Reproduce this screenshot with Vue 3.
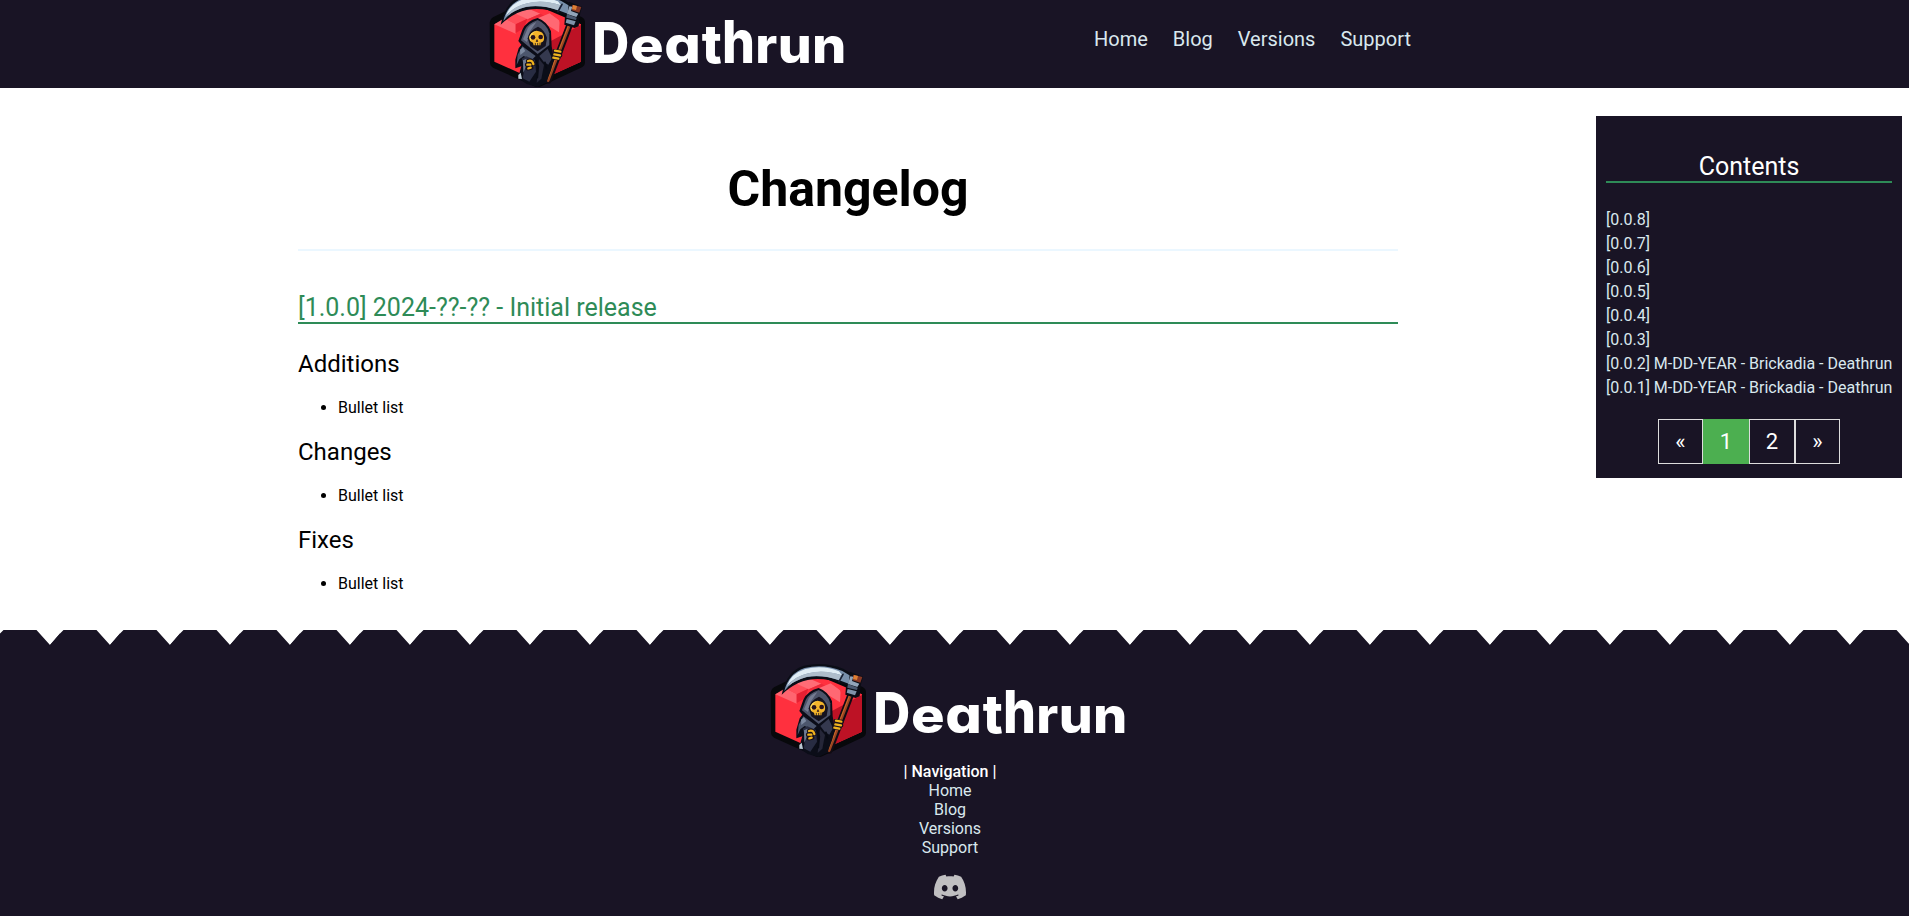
<script setup>
import { h } from 'vue'

const links = ['Home', 'Blog', 'Versions', 'Support']
const sections = ['Additions', 'Changes', 'Fixes']
const contents = [
  '[0.0.8]',
  '[0.0.7]',
  '[0.0.6]',
  '[0.0.5]',
  '[0.0.4]',
  '[0.0.3]',
  '[0.0.2] M-DD-YEAR - Brickadia - Deathrun',
  '[0.0.1] M-DD-YEAR - Brickadia - Deathrun',
]
const pages = ['«', '1', '2', '»']

const p = (d, fill, extra = {}) => h('path', { d, fill, ...extra })
const line = (d, stroke, width) =>
  h('path', { d, fill: 'none', stroke, 'stroke-width': width, 'stroke-linecap': 'round', 'stroke-linejoin': 'round' })

// Letters of the wordmark: glyph, left edge, font size, advance
const letters = [
  ['D', 340, 169, 111],
  ['e', 453, 149, 101],
  ['a', 556, 152, 110],
  ['t', 668, 162, 60],
  ['h', 729, 177, 99],
  ['r', 829, 149, 66],
  ['u', 896, 149, 102],
  ['n', 999, 149, 103],
]

const Logo = () =>
  h('svg', { width: 380, height: 110, viewBox: '0 0 1140 330', role: 'img' }, [
    // cube
    p('M32 112Q33 102 42 97L160 40Q176 33 192 40L309 97Q318 102 318 112V232Q318 242 309 247L190 302Q176 310 162 302L42 248Q33 243 33 232Z', '#07080b'),
    p('M46 118L176 62L306 118V230L176 289L46 230Z', '#ff303e'),
    p('M200 176L306 120V230L205 277Z', '#bd1225'),
    p('M46 118L76 100L110 116V146Z', '#ff6570'),
    p('M76 100L108 84L145 101L110 118Z', '#ff4d59'),
    p('M104 84L142 68L184 86L146 103Z', '#ff6c76'),
    p('M146 103L184 86L222 104L190 120Z', '#ed2939'),
    p('M176 100L212 85L242 105L240 142L208 122Z', '#ff6873'),
    p('M110 118L145 101L135 130L110 144Z', '#e62032'),
    p('M212 84L256 102L250 132L240 106Z', '#ff303e'),
    // shaft
    line('M278 104L208 286', '#100b13', 20),
    line('M276 108L207 286', '#994421', 9),
    line('M273 110L207 280', '#c9682a', 3),
    // blade
    p('M65 119Q80 46 132 32Q190 19 250 41L281 60L273 94L241 85Q231 77 210 76Q158 65 115 84Q85 99 65 119Z', '#0a0d16'),
    p('M73 108Q86 55 134 39Q191 25 247 48L272 63L266 86L242 77Q184 57 138 67Q95 78 73 108Z', '#7890ac'),
    p('M80 94Q92 56 136 42Q189 29 237 49L246 61Q190 43 145 55Q103 65 80 94Z', '#e0edf5'),
    p('M145 55Q191 42 243 61L237 76Q190 58 142 65Q103 76 85 93Q102 64 145 55Z', '#aebdcb'),
    line('M237 80L249 58', '#182033', 5),
    // blade mount
    p('M270 50L309 65L303 88L299 124L287 129L256 119L258 95L266 87Z', '#0b0d16'),
    p('M280 59L307 66L301 83L278 76Z', '#873825'),
    p('M282 60L294 63L291 75L279 72Z', '#df8034'),
    p('M271 64L280 65L276 78L298 86L292 96L264 87Z', '#92a4b9'),
    p('M264 87L293 98L291 105L262 98Z', '#4b5970'),
    p('M263 102L290 109L285 121L260 113Z', '#8093aa'),
    // robe
    p('M176 99Q142 108 130 134L118 168L127 179L119 190L109 224V250L127 244L117 279L143 297L176 306L202 293L216 256L225 222L218 184L216 139Q204 109 176 99Z', '#0b0d18'),
    p('M176 105Q145 116 137 135L126 166L176 207L211 180V145Q204 117 176 105Z', '#4d5369'),
    p('M172 111Q148 120 143 137L132 163L144 171L152 140Z', '#747b91'),
    p('M177 125Q150 137 146 160L154 184L176 199L200 183L204 158Q196 134 177 125Z', '#15131f'),
    p('M130 184L170 213L159 224L134 213L121 223L113 240L116 209Z', '#4c566d'),
    p('M123 194L132 187L139 198L124 210Z', '#7c89a0'),
    p('M181 213L206 191L219 220L208 239L194 230Z', '#35394f'),
    p('M128 221L142 214L168 225L171 260L151 290L131 280L137 247Z', '#282c42'),
    p('M132 226L143 221L140 247L133 263Z', '#707c94'),
    p('M180 222L195 240L187 281L173 294Z', '#252638'),
    line('M171 225L178 244L175 278M198 232L202 250', '#080b15', 5),
    p('M118 270L125 263L129 282L118 281Z', '#bac9d4'),
    // skull
    p('M173 137Q152 141 151 160Q152 171 162 173L164 181H185L187 172Q197 169 195 155Q194 139 173 137Z', '#f4b52b'),
    p('M174 137Q151 142 151 159L155 168L162 144Z', '#ffda58'),
    h('circle', { cx: 162, cy: 157, r: 7, fill: '#29131b' }),
    h('circle', { cx: 185, cy: 156, r: 7, fill: '#29131b' }),
    p('M174 162L170 170H178Z', '#29131b'),
    line('M169 175V182M176 175V182M183 174V181', '#291a1b', 2.5),
    // hands
    line('M226 198L245 200M225 208L244 211M222 217L238 220', '#17101a', 12),
    line('M228 197L244 200M226 208L243 211M223 218L238 221', '#efb31e', 7),
    line('M147 228Q160 224 163 237M144 239H157M146 250L157 248', '#17101a', 13),
    line('M147 228Q160 224 163 237M145 239H154M148 250L155 248', '#efb31e', 7),
    h(
      'g',
      { fill: '#fff', class: 'wordmark' },
      letters.map(([c, x, size, advance]) =>
        h('text', { x, y: 234, 'font-size': size, textLength: advance, lengthAdjust: 'spacingAndGlyphs' }, c),
      ),
    ),
  ])
</script>

<template>
  <div class="page">
    <header class="top">
      <a class="brand"><Logo /></a>
      <nav class="menu">
        <a v-for="l in links" :key="l">{{ l }}</a>
      </nav>
    </header>

    <div class="body">
      <main class="article">
        <h1>Changelog</h1>
        <div class="rule"></div>
        <h2>[1.0.0] 2024-??-?? - Initial release</h2>
        <section v-for="s in sections" :key="s">
          <h3>{{ s }}</h3>
          <ul>
            <li>Bullet list</li>
          </ul>
        </section>
      </main>

      <aside class="contents">
        <h2>Contents</h2>
        <a v-for="c in contents" :key="c">{{ c }}</a>
        <div class="pagination">
          <span v-for="n in pages" :key="n" :class="{ active: n === '1' }">{{ n }}</span>
        </div>
      </aside>
    </div>

    <footer class="bottom">
      <svg class="teeth" width="1909" height="15">
        <defs>
          <pattern id="teeth" width="60" height="15" patternUnits="userSpaceOnUse">
            <path d="M0 3.6V15H60V3.6L50 15L36.5 0H3.5Z" fill="#191425" />
            <path d="M50 15L60 3.6V15Z" fill="#191425" />
          </pattern>
        </defs>
        <rect width="1909" height="15" fill="url(#teeth)" />
      </svg>
      <div class="inner">
        <a class="brand"><Logo /></a>
        <strong>| Navigation |</strong>
        <a v-for="l in links" :key="l">{{ l }}</a>
        <svg class="discord" width="32" height="32" viewBox="0 0 24 24">
          <path
            fill="#c0bfc1"
            d="M20.317 4.3698a19.7913 19.7913 0 00-4.8851-1.5152.0741.0741 0 00-.0785.0371c-.211.3753-.4447.8648-.6083 1.2495-1.8447-.2762-3.68-.2762-5.4868 0-.1636-.3933-.4058-.8742-.6177-1.2495a.077.077 0 00-.0785-.037 19.7363 19.7363 0 00-4.8852 1.515.0699.0699 0 00-.0321.0277C.5334 9.0458-.319 13.5799.0992 18.0578a.0824.0824 0 00.0312.0561c2.0528 1.5076 4.0413 2.4228 5.9929 3.0294a.0777.0777 0 00.0842-.0276c.4616-.6304.8731-1.2952 1.226-1.9942a.076.076 0 00-.0416-.1057c-.6528-.2476-1.2743-.5495-1.8722-.8923a.077.077 0 01-.0076-.1277c.1258-.0943.2517-.1923.3718-.2914a.0743.0743 0 01.0776-.0105c3.9278 1.7933 8.18 1.7933 12.0614 0a.0739.0739 0 01.0785.0095c.1202.099.246.1981.3728.2924a.077.077 0 01-.0066.1276 12.2986 12.2986 0 01-1.873.8914.0766.0766 0 00-.0407.1067c.3604.698.7719 1.3628 1.225 1.9932a.076.076 0 00.0842.0286c1.961-.6067 3.9495-1.5219 6.0023-3.0294a.077.077 0 00.0313-.0552c.5004-5.177-.8382-9.6739-3.5485-13.6604a.061.061 0 00-.0312-.0286zM8.02 15.3312c-1.1825 0-2.1569-1.0857-2.1569-2.419 0-1.3332.9555-2.4189 2.157-2.4189 1.2108 0 2.1757 1.0952 2.1568 2.419 0 1.3332-.9555 2.4189-2.1569 2.4189zm7.9748 0c-1.1825 0-2.1569-1.0857-2.1569-2.419 0-1.3332.9554-2.4189 2.1569-2.4189 1.2108 0 2.1757 1.0952 2.1568 2.419 0 1.3332-.946 2.4189-2.1568 2.4189Z"
          />
        </svg>
      </div>
    </footer>
  </div>
</template>

<style>
body {
  margin: 0;
  overflow: hidden;
}
.wordmark {
  font-family: Inter, sans-serif;
  font-weight: 800;
  font-feature-settings: 'cv11' 1;
}
</style>

<style scoped>
.page {
  height: 916px;
  overflow: hidden;
  display: flex;
  flex-direction: column;
  background: #fff;
  color: #000;
  font: 400 16px/19px Roboto, sans-serif;
}
.top {
  height: 88px;
  flex: none;
  display: flex;
  align-items: flex-start;
  background: #191425;
  overflow: hidden;
}
.top .brand {
  margin: -15px 0 0 479px;
}
.brand svg {
  display: block;
}
.menu {
  display: flex;
  gap: 25px;
  margin: 27px 0 0 235px;
  font-size: 20px;
  line-height: 24px;
  color: #d9e8ee;
}
.body {
  height: 542px;
  flex: none;
  display: flex;
  align-items: flex-start;
  justify-content: space-between;
}
.article {
  width: 1100px;
  margin-left: 298px;
}
h1,
h2,
h3,
ul {
  margin: 0;
}
h1 {
  padding-top: 71px;
  font-size: 50px;
  line-height: 60px;
  font-weight: 700;
  text-align: center;
}
.rule {
  height: 2px;
  margin-top: 30px;
  background: #ebf7ff;
}
h2 {
  height: 30px;
  font-size: 25px;
  line-height: 32px;
  font-weight: 400;
  border-bottom: 2px solid #2e8b57;
}
.article h2 {
  margin-top: 41px;
  color: #2e8b57;
}
.article section {
  height: 88px;
}
.article section:first-of-type {
  margin-top: 25px;
}
h3 {
  height: 28px;
  font-size: 24px;
  line-height: 30px;
  font-weight: 400;
}
ul {
  padding: 21px 0 0 40px;
}
.contents {
  box-sizing: border-box;
  width: 306px;
  height: 362px;
  margin: 28px 7px 0 0;
  padding: 35px 10px 0;
  display: flex;
  flex-direction: column;
  background: #191425;
  color: #d9e8ee;
  line-height: 24px;
  white-space: nowrap;
}
.contents h2 {
  margin-bottom: 25px;
  text-align: center;
  color: #fff;
}
.pagination {
  display: flex;
  justify-content: center;
  margin-top: 19px;
  color: #fff;
  font-size: 22px;
}
.pagination span {
  box-sizing: border-box;
  width: 46px;
  height: 45px;
  line-height: 43px;
  text-align: center;
  border: 1px solid #ddd;
}
.pagination span:first-child,
.pagination span:last-child {
  width: 45px;
}
.pagination .active {
  background: #4caf50;
  border-color: #4caf50;
}
.bottom {
  flex: 1;
  display: flex;
  flex-direction: column;
}
.teeth {
  display: block;
  flex: none;
}
.inner {
  flex: 1;
  display: flex;
  flex-direction: column;
  align-items: center;
  padding-right: 9px;
  background: #191425;
  color: #d9e8ee;
}
.inner .brand {
  margin: 10px 0 -3px;
}
.inner strong {
  font-weight: 500;
  color: #fff;
}
.discord {
  margin-top: 14px;
  flex: none;
}
</style>
